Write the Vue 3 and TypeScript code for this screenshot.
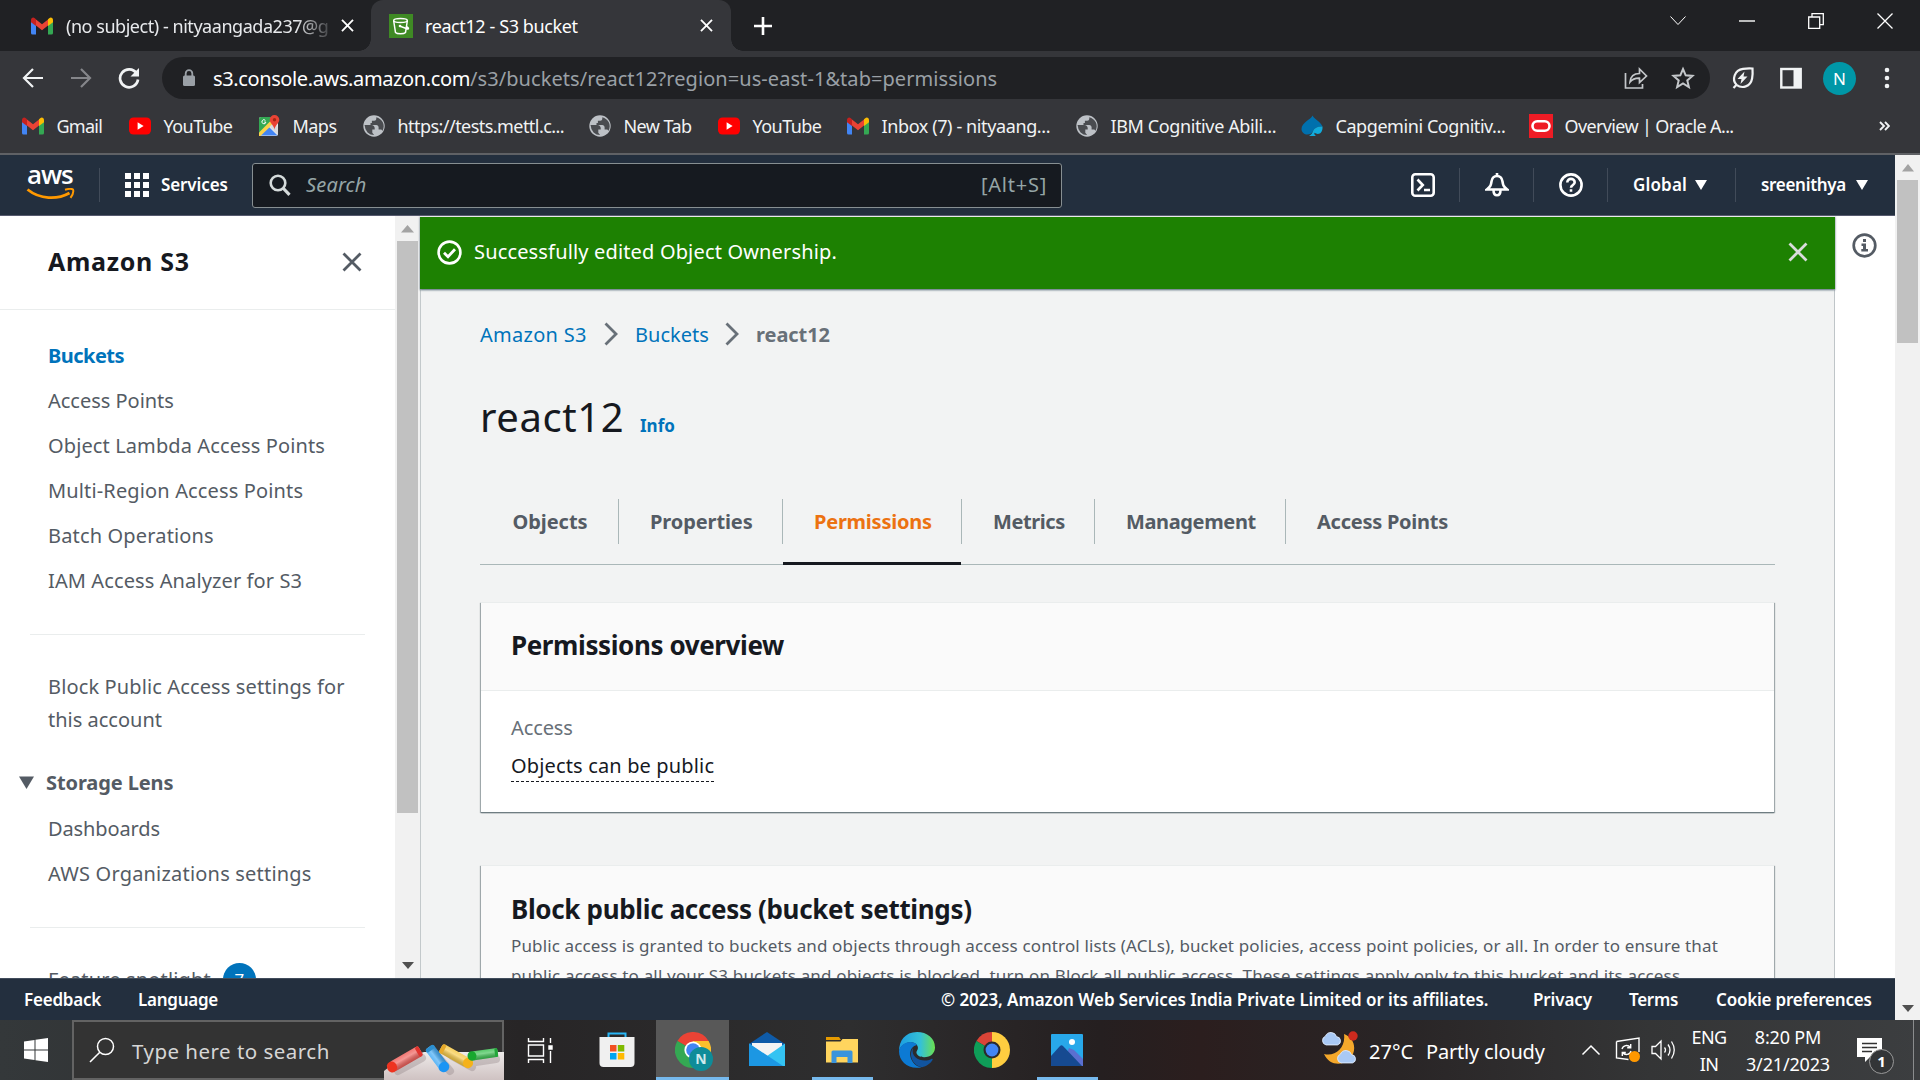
<script setup lang="ts">
interface Bookmark { icon: string; label: string; width: number; spacing: number }
interface Tab { label: string; width: number; spacing: number; active?: boolean }

const bookmarks: Bookmark[] = [
  { icon: 'gmail', label: 'Gmail', width: 107, spacing: -0.76 },
  { icon: 'youtube', label: 'YouTube', width: 129, spacing: -0.54 },
  { icon: 'maps', label: 'Maps', width: 105, spacing: -0.53 },
  { icon: 'globe', label: 'https://tests.mettl.c...', width: 226, spacing: -0.55 },
  { icon: 'globe', label: 'New Tab', width: 129, spacing: -0.58 },
  { icon: 'youtube', label: 'YouTube', width: 129, spacing: -0.54 },
  { icon: 'gmail', label: 'Inbox (7) - nityaang...', width: 229, spacing: -0.39 },
  { icon: 'globe', label: 'IBM Cognitive Abili...', width: 225, spacing: -0.38 },
  { icon: 'capgemini', label: 'Capgemini Cognitiv...', width: 229, spacing: -0.43 },
  { icon: 'oracle', label: 'Overview | Oracle A...', width: 220, spacing: -0.64 },
]

const sideLinks = [
  { label: 'Access Points', spacing: -0.02 },
  { label: 'Object Lambda Access Points', spacing: 0.11 },
  { label: 'Multi-Region Access Points', spacing: 0.14 },
  { label: 'Batch Operations', spacing: 0.16 },
  { label: 'IAM Access Analyzer for S3', spacing: 0.11 },
]

const tabs: Tab[] = [
  { label: 'Objects', width: 139, spacing: -0.06 },
  { label: 'Properties', width: 164, spacing: -0.1 },
  { label: 'Permissions', width: 179, spacing: -0.24, active: true },
  { label: 'Metrics', width: 133, spacing: -0.43 },
  { label: 'Management', width: 191, spacing: -0.37 },
  { label: 'Access Points', width: 192, spacing: -0.26 },
]
</script>

<template>
  <div class="screen">
    <svg width="0" height="0" class="defs">
      <defs>
        <symbol id="gmail" viewBox="0 0 24 18">
          <path d="M1 3.2V16a1.6 1.6 0 0 0 1.6 1.6H6V8L1 3.2z" fill="#4285f4" />
          <path d="M23 3.2V16a1.6 1.6 0 0 1-1.6 1.6H18V8l5-4.8z" fill="#34a853" />
          <path d="M6 8.6V2.4l6 4.8 6-4.8v6.2l-6 4.6z" fill="#ea4335" />
          <path d="M1 3.2v2l5 3.8V2.2L4.800 1.200C3-.2 1 1 1 3.200z" fill="#c5221f" />
          <path d="M23 3.200v2L18 9V2.200l1.200-1C21-.2 23 1 23 3.200z" fill="#fbbc04" />
        </symbol>
        <symbol id="youtube" viewBox="0 0 24 18">
          <rect x="1" y="0.500" width="22" height="17" rx="4.500" fill="#f00" />
          <path d="M9.600 5.300v7.400l6-3.700z" fill="#fff" />
        </symbol>
        <symbol id="maps" viewBox="0 0 24 24">
          <rect x="2" y="3" width="19" height="19" rx="2" fill="#e8eaed" />
          <path d="M2 5a2 2 0 0 1 2-2h12l-4 7-10 10z" fill="#34a853" />
          <path d="M2.500 21.500l9-9 9 9z" fill="#4285f4" />
          <path d="M2 18.500L14.500 6l2.500 3L3.500 22H2z" fill="#fbd24a" />
          <path d="M12.500 12.500L21 21V13l-4-4z" fill="#dadce0" />
          <path d="M17.500 1a4.800 4.800 0 0 0-4.800 4.800c0 3.400 4.300 5.200 4.800 10 .5-4.800 4.800-6.600 4.800-10A4.800 4.800 0 0 0 17.500 1z" fill="#ea4335" />
          <circle cx="17.500" cy="5.800" r="1.700" fill="#a52714" />
          <path d="M8.400 6.400a2 2 0 1 0 .5 1.700H7.200" fill="none" stroke="#fff" stroke-width="1" />
        </symbol>
        <symbol id="globe" viewBox="0 0 24 24">
          <circle cx="12" cy="12" r="10.700" fill="#bdc1c6" />
          <path d="M2.500 11h6.700c2.300 0 3.500 1.300 3.500 3.200v1.400h-2.400v3.200l1.800 2.200A9.200 9.200 0 0 1 2.800 12z" fill="#4a4c50" />
          <path d="M14.300 3.300v1.400c0 1.200-.9 2-2 2H9.900v2.400H8.500v1.800h5.800c1.300 0 2.300 1 2.300 2.300v2.400h1.800c1 0 1.700.5 2 1.400a9.200 9.200 0 0 0-6.100-13.700z" fill="#4a4c50" />
        </symbol>
        <symbol id="capgemini" viewBox="0 0 24 24">
          <path d="M12.500 1.500C11 5.500 1.500 8.500 1.500 15c0 3.500 3 5.500 5.800 5.500 2.500 0 4.700-1 5.700-3.500 1.500-3.500 5-5 9.500-4.500C21 8 14.500 5.500 12.500 1.500z" fill="#0070ad" />
          <path d="M22.500 12.500c-4.500-.5-8 1-9.500 4.500-.6 2.300-2 4-4 5h7c-1.500-.8-1.800-2-1.600-3.200 4 2.700 8.600.7 8.100-6.300z" fill="#12abdb" />
        </symbol>
        <symbol id="oracle" viewBox="0 0 24 24">
          <path d="M0 0h24v24H0z" fill="#ee1c25" />
          <rect x="3.500" y="7.200" width="17" height="9.600" rx="4.800" fill="none" stroke="#fff" stroke-width="2.600" />
        </symbol>
        <symbol id="cross" viewBox="0 0 20 20">
          <path d="M1.500 1.500l17 17M18.500 1.500l-17 17" fill="none" stroke="currentColor" stroke-width="2.800" />
        </symbol>
        <symbol id="chrome" viewBox="0 0 36 36">
          <path d="M18 18L2.400 9A18 18 0 0 1 33.600 9z" fill="#ea4335" />
          <path d="M18 18L2.400 9A18 18 0 0 0 18 36l7.800-13.500z" fill="#34a853" />
          <path d="M18 18h7.800L18 36A18 18 0 0 0 33.600 9H18z" fill="#fbc02d" />
          <circle cx="18" cy="18" r="8.600" fill="#fff" />
          <circle cx="18" cy="18" r="6.800" fill="#4285f4" />
        </symbol>
        <symbol id="cloud" viewBox="0 0 24 16">
          <path d="M5.500 15A5 5 0 0 1 4.800 5.500 6.500 6.500 0 0 1 17 6a4.600 4.600 0 0 1 1 9z" fill="#a9c9f5" stroke="#dfeafc" stroke-width="1" />
        </symbol>
      </defs>
    </svg>

    <header class="tabstrip">
      <div class="btab idle">
        <svg class="fav" width="24" height="18"><use href="#gmail" /></svg>
        <span class="btitle fade">(no subject) - nityaangada237@g</span>
        <svg class="bclose" width="13" height="13"><use href="#cross" /></svg>
      </div>
      <div class="btab current">
        <svg class="fav s3" width="24" height="24" viewBox="0 0 24 24">
          <path d="M0 0h24v24H0z" fill="#3f8a24" />
          <ellipse cx="11.500" cy="6.500" rx="6.800" ry="2" fill="none" stroke="#fff" stroke-width="1.500" />
          <path d="M4.700 7l1.800 11.500c1.500 1.700 8.500 1.700 10 0L18.300 7M10.500 12l8 3c1.700 0 1-1.500-1.200-2.500" fill="none" stroke="#fff" stroke-width="1.500" />
          <circle cx="11" cy="12" r="1.300" fill="#fff" />
        </svg>
        <span class="btitle">react12 - S3 bucket</span>
        <svg class="bclose" width="13" height="13"><use href="#cross" /></svg>
      </div>
      <svg class="plus" width="20" height="20" viewBox="0 0 20 20"><path d="M10 1v18M1 10h18" stroke="#fff" stroke-width="2.600" /></svg>
      <div class="winctl">
        <svg width="16" height="16" viewBox="0 0 16 16"><path d="M.5 3.500l7.500 8 7.500-8" /></svg>
        <svg width="16" height="16" viewBox="0 0 16 16"><path d="M0 8h16" stroke-width="1.400" /></svg>
        <svg width="16" height="16" viewBox="0 0 16 16"><path d="M.7 4h11v11.300h-11zM4 4V.7h11.300v11H12" stroke-width="1.300" /></svg>
        <svg width="16" height="16" viewBox="0 0 16 16"><path d="M.5.5l15 15M15.500.5l-15 15" stroke-width="1.300" /></svg>
      </div>
    </header>

    <div class="toolbar">
      <svg class="navi" width="22" height="22" viewBox="0 0 22 22"><path d="M21 11H2.500M11 2L2 11l9 9" stroke="#f1f3f4" /></svg>
      <svg class="navi" width="22" height="22" viewBox="0 0 22 22"><path d="M1 11h18.500M11 2l9 9-9 9" stroke="#85868a" /></svg>
      <svg class="navi" width="22" height="22" viewBox="0 0 22 22"><path d="M18.500 6.200A9 9 0 1 0 20 12.500" stroke="#f1f3f4" stroke-width="2.700" /><path d="M21 1v8.500h-8.500z" fill="#f1f3f4" stroke="none" /></svg>
      <div class="omnibox">
        <svg width="14" height="18" viewBox="0 0 14 18"><rect x="1" y="6.500" width="12" height="10.500" rx="1.500" fill="#9aa0a6" /><path d="M3.700 7V4.500a3.300 3.300 0 0 1 6.600 0V7" fill="none" stroke="#9aa0a6" stroke-width="1.800" /></svg>
        <span class="url"><b>s3.console.aws.amazon.com</b>/s3/buckets/react12?region=us-east-1&amp;tab=permissions</span>
        <svg class="share" width="24" height="24" viewBox="0 0 24 24"><path d="M1.500 7v15h17v-4M6 16c.5-5.500 4-8.500 9.500-8.500V3l7 7-7 6.500v-4.300C11.500 12 8.500 13 6 16z" fill="none" stroke="#c4c7ca" stroke-width="1.700" /></svg>
        <svg class="star" width="24" height="24" viewBox="0 0 24 24"><path d="M12 3l2.700 6.300 6.800.6-5.200 4.500 1.600 6.700L12 17.500l-5.900 3.600 1.600-6.700L2.500 9.900l6.800-.6z" fill="none" stroke="#c4c7ca" stroke-width="2" /></svg>
      </div>
      <svg class="ext" width="24" height="24" viewBox="0 0 24 24"><path d="M2.500 22l3-3.200M5.500 18.800C.5 13.500 3.500 4 12 2.800c3-.4 6-.6 9.500-.3.300 4.500.2 7-.4 10C19.500 21 11 23 5.500 18.800z" fill="none" stroke="#f1f3f4" stroke-width="2.200" /><path d="M13.500 5.500l-7 7.500h4l-1 5 7-7.500h-4z" fill="#f1f3f4" /></svg>
      <svg class="panel" width="22" height="22" viewBox="0 0 22 22"><rect x="1.300" y="2" width="19.400" height="18.500" fill="none" stroke="#f1f3f4" stroke-width="2.400" /><path d="M13.500 2H21v18.500h-7.500z" fill="#f1f3f4" /></svg>
      <span class="avatar">N</span>
      <svg class="dots" width="6" height="22" viewBox="0 0 6 22"><circle cx="3" cy="3" r="2.300" /><circle cx="3" cy="11" r="2.300" /><circle cx="3" cy="19" r="2.300" /></svg>
    </div>

    <nav class="bookmarks">
      <div v-for="(b, i) in bookmarks" :key="i" class="bm" :style="{ width: b.width + 'px', letterSpacing: b.spacing + 'px' }">
        <svg width="24" :height="b.icon === 'gmail' || b.icon === 'youtube' ? 18 : 24"><use :href="'#' + b.icon" /></svg>
        <span>{{ b.label }}</span>
      </div>
      <svg class="more" width="11" height="10" viewBox="0 0 11 10"><path d="M1 1l4 4-4 4M6 1l4 4-4 4" fill="none" stroke="#f1f3f4" stroke-width="1.900" /></svg>
    </nav>

    <div class="page">
      <div class="console">
        <header class="awsnav">
          <div class="logo">
            <span>aws</span>
            <svg width="50" height="14" viewBox="0 0 50 14"><path d="M1.500 1.500C14 11.500 31 12 43.500 5" fill="none" stroke="#f90" stroke-width="2.800" /><path d="M39 1.800c3.500-1 6.500-1.300 8-.3.800 2-.5 5.500-2.500 8.300" fill="none" stroke="#f90" stroke-width="2" /></svg>
          </div>
          <i class="vr first"></i>
          <svg class="grid" width="24" height="24" viewBox="0 0 24 24" fill="#fff"><path d="M0 0h6v6H0zM9 0h6v6H9zM18 0h6v6h-6zM0 9h6v6H0zM9 9h6v6H9zM18 9h6v6h-6zM0 18h6v6H0zM9 18h6v6H9zM18 18h6v6h-6z" /></svg>
          <span class="services">Services</span>
          <div class="search">
            <svg width="22" height="22" viewBox="0 0 22 22"><circle cx="9" cy="9" r="7.300" fill="none" stroke="#d5dbdb" stroke-width="2.600" /><path d="M14 14l6.500 6.800" stroke="#d5dbdb" stroke-width="3.200" /></svg>
            <em>Search</em>
            <span>[Alt+S]</span>
          </div>
          <svg class="shell" width="24" height="24" viewBox="0 0 24 24"><rect x="1.300" y="1.300" width="21.400" height="21.400" rx="3" /><path d="M6.500 6.500l5.300 5.500-5.300 5.500M13 17h6" /></svg>
          <i class="vr"></i>
          <svg class="ni" width="24" height="24" viewBox="0 0 24 24"><path d="M12 0v3M1.800 16.500c4-3 4.200-4.500 4.700-8C7 5 9 3 12 3s5 2 5.500 5.500c.5 3.500.7 5 4.700 8zM8.500 17c0 7 7 7 7 0" /></svg>
          <i class="vr"></i>
          <svg class="ni" width="24" height="24" viewBox="0 0 24 24"><circle cx="12" cy="12" r="10.600" /><path d="M8.300 9.500c0-5 7.400-4.600 7.400-.3 0 3-3.700 2.500-3.700 5.600M12 16.300v2.500" /></svg>
          <i class="vr"></i>
          <span class="region">Global</span><i class="caret"></i>
          <i class="vr r2"></i>
          <span class="user">sreenithya</span><i class="caret u"></i>
        </header>

        <div class="body">
          <aside class="side">
            <div class="sidehead"><span>Amazon S3</span><svg width="20" height="20"><use href="#cross" /></svg></div>
            <div class="links">
              <a class="sel">Buckets</a>
              <a v-for="l in sideLinks" :key="l.label" :style="{ letterSpacing: l.spacing + 'px' }">{{ l.label }}</a>
            </div>
            <hr />
            <a class="bpa">Block Public Access settings for<br /><span>this account</span></a>
            <div class="lens"><svg width="15" height="13" viewBox="0 0 15 13"><path d="M0 .5h15L7.500 13z" fill="#545b64" /></svg><span>Storage Lens</span></div>
            <div class="links two"><a class="dash">Dashboards</a><a class="orgs">AWS Organizations settings</a></div>
            <hr />
            <div class="feature"><a>Feature spotlight</a><span>7</span></div>
          </aside>
          <div class="scroll inner">
            <svg width="13" height="8" viewBox="0 0 13 8"><path d="M6.500 0L13 7.500H0z" fill="#a3a3a3" /></svg>
            <i></i>
            <svg class="dn" width="12" height="7" viewBox="0 0 12 7"><path d="M6 7L0 0h12z" fill="#505050" /></svg>
          </div>

          <main class="main">
            <div class="flash">
              <svg width="25" height="25" viewBox="0 0 25 25"><circle cx="12.500" cy="12.500" r="10.900" fill="none" stroke="#fff" stroke-width="2.600" /><path d="M7 12.800l4 3.900 7-7.400" fill="none" stroke="#fff" stroke-width="2.800" /></svg>
              <span>Successfully edited Object Ownership.</span>
              <svg class="fx" width="20" height="20"><use href="#cross" /></svg>
            </div>
            <div class="inside">
              <div class="crumbs">
                <a>Amazon S3</a>
                <svg width="14" height="24" viewBox="0 0 14 24"><path d="M1.500 1.500L12 12 1.500 22.500" /></svg>
                <a class="c2">Buckets</a>
                <svg width="14" height="24" viewBox="0 0 14 24"><path d="M1.500 1.500L12 12 1.500 22.500" /></svg>
                <b>react12</b>
              </div>
              <div class="heading"><h1>react12</h1><a>Info</a></div>
              <div class="tabs">
                <div v-for="t in tabs" :key="t.label" class="tab" :class="{ active: t.active }" :style="{ width: t.width + 'px', letterSpacing: t.spacing + 'px' }"><span>{{ t.label }}</span></div>
              </div>
              <section class="card overview">
                <h2>Permissions overview</h2>
                <div class="cbody"><p>Access</p><span class="pub">Objects can be public</span></div>
              </section>
              <section class="card block">
                <h2>Block public access (bucket settings)</h2>
                <p>Public access is granted to buckets and objects through access control lists (ACLs), bucket policies, access point policies, or all. In order to ensure that<br /><span>public access to all your S3 buckets and objects is blocked, turn on Block all public access. These settings apply only to this bucket and its access</span></p>
              </section>
            </div>
          </main>
          <div class="tools">
            <svg width="25" height="25" viewBox="0 0 25 25"><circle cx="12.500" cy="12.500" r="10.800" fill="none" stroke="#545b64" stroke-width="2.700" /><path d="M11 6h3v3h-3zM9.500 10.500H14V16h2v2.500H9.300V16H11v-3H9.500z" fill="#545b64" /></svg>
          </div>
        </div>

        <footer class="foot">
          <span class="fb">Feedback</span><span class="lang">Language</span>
          <span class="copy">© 2023, Amazon Web Services India Private Limited or its affiliates.</span>
          <span class="priv">Privacy</span><span class="terms">Terms</span><span class="cook">Cookie preferences</span>
        </footer>
      </div>
      <div class="scroll outer">
        <svg width="12" height="8" viewBox="0 0 12 8"><path d="M6 0l6 7.500H0z" fill="#a3a3a3" /></svg>
        <i></i>
        <svg class="dn" width="12" height="7" viewBox="0 0 12 7"><path d="M6 7L0 0h12z" fill="#505050" /></svg>
      </div>
    </div>

    <div class="taskbar">
      <div class="start"><svg width="24" height="24" viewBox="0 0 24 24" fill="#fff"><path d="M0 3.500l10.500-1.500v9.500H0zM11.500 1.800L24 0v11.500H11.500zM0 12.500h10.500V22L0 20.500zM11.500 12.500H24V24l-12.500-1.800z" /></svg></div>
      <div class="tsearch">
        <svg width="26" height="26" viewBox="0 0 26 26"><circle cx="16.500" cy="9.500" r="8" fill="none" stroke="#fff" stroke-width="1.500" /><path d="M10.800 15.200L1 25" stroke="#fff" stroke-width="1.600" /></svg>
        <span>Type here to search</span>
        <svg class="chalks" width="120" height="36" viewBox="0 0 120 36">
          <defs>
            <linearGradient id="paper" x1="0" y1="0" x2="0" y2="1"><stop offset="0" stop-color="#eeebea" /><stop offset="1" stop-color="#cfc2c2" /></linearGradient>
            <linearGradient id="stick" x1="0" y1="0" x2="0" y2="1"><stop offset="0" stop-color="#fff" stop-opacity=".15" /><stop offset=".4" stop-color="#fff" stop-opacity=".35" /><stop offset="1" stop-color="#000" stop-opacity=".18" /></linearGradient>
          </defs>
          <path d="M0 36v-9L14 16 40 8h80v28z" fill="url(#paper)" />
          <path d="M14 27L38 14M66 27L52 10M88 23L68 12M92 18l20-3" stroke="#8d7f80" stroke-width="8" stroke-linecap="round" opacity=".35" fill="none" />
          <g transform="translate(8 23) rotate(-30)"><rect x="0" y="-5.500" width="33" height="11" rx="2.500" fill="#ef5f5a" /><rect x="0" y="-5.500" width="33" height="11" rx="2.500" fill="url(#stick)" /><rect x="29" y="-5.500" width="4" height="11" rx="2" fill="#e0342e" /><ellipse cx="0" cy="0" rx="5" ry="5.600" fill="#ee3320" /></g>
          <g transform="translate(60 23) rotate(-127)"><rect x="0" y="-5" width="25" height="10" rx="2.500" fill="#3fa9f5" /><rect x="0" y="-5" width="25" height="10" rx="2.500" fill="url(#stick)" /><rect x="21" y="-5" width="4" height="10" rx="2" fill="#2b8fd0" /><ellipse cx="0" cy="0" rx="5" ry="5.500" fill="#1b95f4" /></g>
          <g transform="translate(84 19) rotate(-151)"><rect x="0" y="-5" width="31" height="10" rx="2.500" fill="#f6c945" /><rect x="0" y="-5" width="31" height="10" rx="2.500" fill="url(#stick)" transform="scale(1 -1)" /><rect x="27" y="-5" width="4" height="10" rx="2" fill="#e5a92a" /><ellipse cx="0" cy="0" rx="5" ry="5.200" fill="#f5b21a" /></g>
          <g transform="translate(88 12) rotate(-8)"><rect x="0" y="-4.500" width="26" height="9" rx="2" fill="#3cc152" /><rect x="0" y="-4.500" width="26" height="9" rx="2" fill="url(#stick)" /><rect x="23" y="-4.500" width="3" height="9" rx="1.500" fill="#22a83a" /><ellipse cx="0" cy="0" rx="4.500" ry="4.800" fill="#17a82e" /></g>
        </svg>
      </div>
      <div class="apps">
        <div class="app tv"><svg width="26" height="26" viewBox="0 0 26 26" fill="none" stroke="#fff" stroke-width="1.400"><path d="M1.500 1v3.500h15V1M1.500 8h15v11h-15zM1.500 26v-3.500h15V26M23.500 1v5M23.500 14v12" /><path d="M22 9h3v3h-3z" fill="#fff" /></svg></div>
        <div class="app store"><svg width="36" height="36" viewBox="0 0 36 36"><path d="M9.500 7V1.500h17V7" fill="none" stroke="#29b6f6" stroke-width="2" /><path d="M.5 5h35v26a4 4 0 0 1-4 4h-27a4 4 0 0 1-4-4z" fill="#f0f0f0" /><path d="M11 13h6.500v6.500H11z" fill="#f25022" /><path d="M18.800 13h6.500v6.500h-6.500z" fill="#7fba00" /><path d="M11 21h6.500v6.500H11z" fill="#00a4ef" /><path d="M18.800 21h6.500v6.500h-6.500z" fill="#ffb900" /></svg></div>
        <div class="app on"><svg width="36" height="36"><use href="#chrome" /></svg><span>N</span></div>
        <div class="app mail"><svg width="36" height="36" viewBox="0 0 36 36"><path d="M0 13L18 1l18 12v6H0z" fill="#0f5ba8" /><path d="M3 12h30v14H3z" fill="#f4f4f4" /><path d="M0 12.500L18 25l18-12.500V35H0z" fill="#34c3f2" /><path d="M0 12.500L34 35H0z" fill="#1c97e3" /></svg></div>
        <div class="app run files"><svg width="32" height="28" viewBox="0 0 32 28"><path d="M0 1h13l2 3H0z" fill="#e59a00" /><path d="M0 5.500h14.500l2-2.500H32v23.500H0z" fill="#ffd55e" /><path d="M5.500 27V16a1.500 1.500 0 0 1 1.500-1.500h18a1.500 1.500 0 0 1 1.500 1.500v11h-5v-6h-11v6z" fill="#3a94dc" /></svg></div>
        <div class="app edge"><svg width="36" height="36" viewBox="0 0 36 36">
          <defs><linearGradient id="e1"><stop offset="0" stop-color="#1b9de2" /><stop offset=".6" stop-color="#35c1d6" /><stop offset="1" stop-color="#6be04f" /></linearGradient></defs>
          <path d="M18 0C6 0 0 9 0 19 3 9 16 8 18.500 14c1.500 3.500-1.500 5-1 7 1 4 7 5 12 3.500 4-1.200 6.500-5 6.500-9C36 6 28 0 18 0z" fill="url(#e1)" />
          <path d="M0 19C2 9 15 8 18 13c-5 1-8 6-6.500 12 1.500 5.500 5.500 9.500 11 10.300C10 38 0 30 0 19z" fill="#0c7ad4" />
          <path d="M14 16c-5 7 0 18 9 19.200 4.500-.7 8.500-4 10.500-7.200.5-1-.3-1.500-1.200-1C25 31 11 27 14 16z" fill="#11549f" />
        </svg></div>
        <div class="app chrome2"><svg width="36" height="36" viewBox="0 0 36 36"><path d="M18 18L2.400 9A18 18 0 0 1 18 0z" fill="#db4437" /><path d="M18 18L2.400 9A18 18 0 0 0 18 36z" fill="#0f9d58" /><path d="M18 0a18 18 0 0 1 0 36z" fill="#ffcd40" /><circle cx="18" cy="18" r="8.500" fill="#2a2a2c" /><circle cx="18" cy="18" r="6.400" fill="#4285f4" /></svg></div>
        <div class="app run photos"><svg width="32" height="32" viewBox="0 0 32 32"><rect width="32" height="32" rx="1" fill="#28a8ea" /><path d="M18 14l5 2 9 9v7H10z" fill="#5b6fd0" /><path d="M0 22l9-10q1.500-1.500 3 0l19 20H0z" fill="#164a91" /><circle cx="21" cy="8" r="3" fill="#fff" /></svg></div>
      </div>
      <div class="tray">
        <svg class="moon" width="38" height="36" viewBox="0 0 38 36"><path d="M23 3C31 6 35.500 14 32 23 27 35 9 37 3 23 14 26 25 17 23 3z" fill="#f5a82b" /><circle cx="32" cy="5" r="4.700" fill="#cc2a1e" /><svg x="0" y="0" width="22" height="15"><use href="#cloud" /></svg><svg x="15" y="18" width="22" height="15"><use href="#cloud" /></svg></svg>
        <span class="temp">27°C</span><span class="wx">Partly cloudy</span>
        <svg class="up" width="20" height="12" viewBox="0 0 20 12"><path d="M1.500 10.500L10 2l8.500 8.500" fill="none" stroke="#fff" stroke-width="1.500" /></svg>
        <svg class="dev" width="26" height="26" viewBox="0 0 26 26"><path d="M1.500 4.500L24 1v14M1.500 4.500V21l12 1.500M7 12c1-4 6-4.500 8.500-1.500M15.700 7v3.700h-3.500M16 14c-1 4-6 4.500-8.500 1.500M7.300 19v-3.500h3.500" fill="none" stroke="#fff" stroke-width="1.400" /><circle cx="19.500" cy="19.500" r="5.500" fill="#ff9800" /></svg>
        <svg class="vol" width="25" height="22" viewBox="0 0 25 22"><path d="M1 7.500h3.500L10 2v18l-5.500-5.500H1zM13.500 8.500q2 2.500 0 5M17 5.500q4 5.500 0 11M20.500 2.500q5.500 8.500 0 17" fill="none" stroke="#fff" stroke-width="1.300" /></svg>
        <div class="two-line eng"><span>ENG</span><span>IN</span></div>
        <div class="two-line clock"><span class="t">8:20 PM</span><span>3/21/2023</span></div>
        <div class="notif"><svg width="25" height="26" viewBox="0 0 25 26"><path d="M0 1h25v19H13l-5 5v-5H0z" fill="#fff" /><path d="M5 6.500h15M5 10.500h15M5 14.500h10" stroke="#333" stroke-width="1.300" /></svg><b>1</b></div>
        <i class="peek"></i>
      </div>
    </div>
  </div>
</template>

<style>
body { margin: 0; overflow: hidden; background: #202124; }
</style>

<style scoped>
* { box-sizing: border-box; }
.screen { width: 1920px; height: 1080px; display: flex; flex-direction: column; overflow: hidden; font-family: "Noto Sans", "Open Sans", sans-serif; white-space: nowrap; }
.defs { position: absolute; }
svg { display: block; flex: none; }
hr, h1, h2, p { margin: 0; }

.tabstrip { height: 51px; flex: none; background: #202124; display: flex; align-items: center; color: #fff; }
.btab { display: flex; align-items: center; height: 51px; }
.idle { width: 371px; padding-left: 30px; }
.fav { margin-right: 12px; }
.btitle { width: 275px; font-size: 18px; letter-spacing: -.4px; overflow: hidden; }
.fade { width: 264px; letter-spacing: -.46px; color: #e8eaed; -webkit-mask-image: linear-gradient(90deg, #000 230px, rgba(0,0,0,.2) 262px); mask-image: linear-gradient(90deg, #000 230px, rgba(0,0,0,.2) 262px); }
.idle .bclose { margin-left: 11px; }
.current { position: relative; width: 360px; padding-left: 18px; background: #35363a; border-radius: 12px 12px 0 0; }
.current::before, .current::after { content: ""; position: absolute; bottom: 0; width: 12px; height: 12px; }
.current::before { left: -12px; background: radial-gradient(circle at 0 0, transparent 11.5px, #35363a 12px); }
.current::after { right: -12px; background: radial-gradient(circle at 100% 0, transparent 11.5px, #35363a 12px); }
.plus { margin-left: 22px; }
.winctl { margin-left: auto; display: flex; gap: 53px; padding: 0 27px 9px 0; fill: none; stroke: #fff; }

.toolbar { height: 54px; flex: none; background: #35363a; display: flex; align-items: center; padding: 0 0 0 22px; }
.navi { margin-right: 26px; fill: none; stroke-width: 2.200; }
.omnibox { width: 1548px; height: 42px; margin-left: -4px; border-radius: 21px; background: #202124; display: flex; align-items: center; padding-left: 20px; }
.url { flex: 1; margin-left: 17px; font-size: 20px; letter-spacing: .06px; color: #9aa0a6; }
.url b { font-weight: 400; color: #fff; letter-spacing: -.38px; }
.share { margin-right: 23px; }
.star { margin-right: 15px; }
.ext { margin-left: 21px; }
.panel { margin-left: 25px; }
.avatar { width: 33px; height: 33px; margin-left: 21px; border-radius: 50%; background: #0097a7; color: #fff; font-size: 17px; line-height: 33px; text-align: center; }
.dots { margin-left: 28px; fill: #f1f3f4; }

.bookmarks { height: 50px; flex: none; background: #35363a; border-bottom: 2px solid #5f6165; display: flex; padding: 0 0 7px 21px; color: #f1f3f4; font-size: 18px; }
.bm { display: flex; align-items: center; gap: 11.500px; }
.more { margin: 16px 0 0 130px; }

.page { flex: none; height: 865px; display: flex; }
.console { width: 1895px; display: flex; flex-direction: column; }
.awsnav { height: 61px; flex: none; background: #232f3e; border-bottom: 1px solid #565a6e; display: flex; align-items: center; color: #fff; font-size: 17px; font-weight: 600; }
.logo { width: 50px; height: 36px; margin: 0 0 4px 26px; }
.logo span { display: block; height: 23px; margin-left: 1px; font: 600 26px/19px "Open Sans", sans-serif; letter-spacing: -1.1px; }
.vr { width: 1px; height: 34px; background: #414b59; flex: none; margin-left: 24px; margin-right: 25px; }
.vr.first { margin-left: 23px; margin-right: 25px; }
.services { width: 91px; margin-left: 12px; letter-spacing: -.1px; }
.services, .region, .user { padding-bottom: 1px; }
.search { width: 810px; height: 45px; border: 1px solid #878f92; border-radius: 3px; background: #161a20; display: flex; align-items: center; padding: 0 14px 0 16px; font-size: 20px; font-weight: 400; color: #95a5a6; }
.search em { margin: -1px 0 0 15px; letter-spacing: .15px; flex: 1; }
.search span { margin-top: -1px; letter-spacing: .75px; }
.shell { margin-left: 349px; }
.shell, .ni { fill: none; stroke: #fff; stroke-width: 2.600; }
.region { width: 62px; letter-spacing: .16px; }
.user { width: 94px; letter-spacing: -.3px; }
.caret { border: 6.500px solid transparent; border-top: 10px solid #fff; border-bottom: 0; margin-bottom: 1px; }
.caret.u { margin-left: 1px; }
.vr.r2 { margin-left: 28px; }

.body { height: 762px; flex: none; display: flex; overflow: hidden; }
.side { width: 395px; background: #fff; overflow: hidden; color: #545b64; font-size: 20px; line-height: 33px; }
.sidehead { height: 94px; border-bottom: 1px solid #eaeded; display: flex; justify-content: space-between; padding: 29px 33px 0 48px; }
.sidehead span { color: #16191f; font-size: 25px; font-weight: 700; letter-spacing: .7px; }
.sidehead svg { margin-top: 7px; }
.links { display: flex; flex-direction: column; gap: 12px; padding: 29px 0 0 48px; }
.links .sel { color: #0073bb; font-weight: 700; letter-spacing: -.53px; }
.side hr { border: 0; height: 1px; background: #eaeded; margin: 37px 30px 35px; }
.bpa { display: block; margin-left: 48px; letter-spacing: .13px; }
.bpa span { letter-spacing: 0; }
.lens { display: flex; align-items: center; padding-left: 19px; margin-top: 30px; font-weight: 700; letter-spacing: -.1px; }
.lens span { margin-left: 12px; }
.two { padding-top: 13px; }
.dash { letter-spacing: -.11px; }
.orgs { letter-spacing: .2px; }
.feature { display: flex; align-items: center; margin-left: 48px; letter-spacing: .16px; }
.feature span { width: 33px; height: 33px; margin-left: 12px; border-radius: 50%; background: #0073bb; color: #fff; font-size: 17px; text-align: center; letter-spacing: 0; }
.scroll { width: 25px; flex: none; background: #f1f1f1; display: flex; flex-direction: column; align-items: center; }
.scroll i { width: 21px; background: #c1c1c1; }
.scroll .dn { margin-top: auto; }
.inner { padding: 9px 0 9px; }
.inner i { height: 572px; margin-top: 8px; }
.outer { padding: 9px 0 8px; }
.outer i { height: 163px; margin-top: 8px; }

.main { width: 1415px; background: #f2f3f3; border-left: 1px solid #c3c9cb; border-right: 1px solid #bfc5c8; }
.flash { height: 73px; margin: 0 -1px; position: relative; border-top: 1px solid #e8ebeb; background: #1d8102; box-shadow: 0 1px 2px #4b6170; color: #fff; display: flex; font-size: 20px; padding: 23px 27px 0 17px; letter-spacing: .16px; }
.flash span { flex: 1; margin-left: 12px; margin-top: -5px; line-height: 33px; }
.flash .fx { margin-top: 2px; color: #d9dcdc; }
.inside { padding: 0 59px; }
.crumbs { display: flex; align-items: center; height: 24px; margin-top: 33px; font-size: 20px; }
.crumbs a { color: #0073bb; width: 107px; letter-spacing: .28px; }
.crumbs svg { margin: 0 17px 0 17px; fill: none; stroke: #687078; stroke-width: 2.800; }
.crumbs .c2 { width: 73px; letter-spacing: .02px; }
.crumbs b { color: #687078; letter-spacing: -.05px; }
.heading { display: flex; align-items: baseline; height: 54px; margin-top: 41px; }
h1 { width: 160px; font-size: 40px; font-weight: 400; line-height: 60px; letter-spacing: .6px; color: #16191f; }
.heading a { color: #0073bb; font-size: 17px; font-weight: 700; }
.tabs { display: flex; height: 85px; margin-top: 39px; border-bottom: 1px solid #aab7b8; padding-top: 19px; }
.tab { height: 66px; color: #545b64; font-size: 20px; font-weight: 700; line-height: 45px; }
.tab span { display: block; height: 45px; padding-left: 31px; border-right: 1px solid #aab7b8; }
.tab:first-child span { padding-left: 32.500px; }
.tab:last-child span { border: 0; }
.active { color: #ec7211; position: relative; }
.active::after { content: ""; position: absolute; left: 0; right: 1px; bottom: 0; height: 3px; background: #16191f; }
.card { margin: 37px 1px 0; background: #fff; border-top: 1px solid #eaeded; box-shadow: 0 1px 1px #6f7d82, 1px 1px 1px rgba(0,28,36,.3), -1px 1px 1px rgba(0,28,36,.3); color: #16191f; }
h2 { font-size: 26px; font-weight: 700; letter-spacing: -.4px; }
.overview { height: 210px; }
.overview h2 { height: 88px; line-height: 84px; background: #fafafa; border-bottom: 1px solid #eaeded; padding-left: 30px; }
.cbody { padding: 20px 30px; font-size: 20px; line-height: 34px; }
.cbody p { color: #687078; letter-spacing: -.1px; }
.pub { display: inline-block; height: 33px; margin-top: 4px; line-height: 33px; letter-spacing: .15px; border-bottom: 1px dashed #16191f; }
.block { height: 300px; margin-top: 53px; background: #fafafa; padding: 24px 30px; }
.block h2 { line-height: 38px; letter-spacing: -.34px; }
.block p { margin-top: 3px; font-size: 17px; line-height: 30px; letter-spacing: .135px; color: #545b64; }
.block p span { letter-spacing: .17px; }
.tools { width: 60px; background: #fff; padding: 17px 0 0 17px; }

.foot { height: 42px; flex: none; background: #232f3e; border-top: 1px solid #414d5c; color: #fff; font-size: 17px; font-weight: 600; line-height: 41px; display: flex; padding-left: 24px; }
.fb { width: 114px; letter-spacing: -.22px; }
.lang { width: 803px; letter-spacing: -.26px; }
.copy { width: 592px; letter-spacing: -.07px; }
.priv { width: 96px; letter-spacing: -.11px; }
.terms { width: 87px; letter-spacing: -.3px; }
.cook { letter-spacing: -.22px; }

.taskbar { height: 60px; flex: none; display: flex; color: #fff; background: linear-gradient(90deg, #34383a 0, #2f3031 300px, #272526 520px, #2e2e2f 850px, #251f20 1100px, #2b1e1e 1200px, #292526 1400px, #343536 1650px, #3c3e40 1920px); }
.start { width: 72px; padding: 18px 24px; }
.tsearch { width: 432px; height: 60px; background: #333; border: 2px solid #636363; display: flex; align-items: center; padding-left: 15px; position: relative; font-size: 20.500px; color: #d6d6d6; }
.tsearch > span { margin: 2px 0 0 17px; letter-spacing: .48px; }
.chalks { position: absolute; right: -2px; bottom: -2px; }
.apps { display: flex; }
.app { width: 61px; height: 60px; display: flex; align-items: center; justify-content: center; }
.tv { width: 74px; padding-right: 2px; }
.store { width: 78px; padding-right: 1px; }
.on { width: 73px; position: relative; background: #585858; border-bottom: 3px solid #76b9ed; padding-top: 3px; }
.on span { position: absolute; left: 33px; top: 27px; width: 24px; height: 24px; border-radius: 50%; background: #0e8c99; font-size: 14px; font-weight: 700; line-height: 24px; text-align: center; color: #cfe9ec; }
.mail { width: 76px; }
.mail svg { margin-top: -2px; }
.run { border-bottom: 3px solid #76b9ed; padding: 3px 2px 0 0; margin-left: 7px; }
.edge { width: 88px; padding-right: 1px; }
.chrome2 { width: 62px; padding-right: 1px; }
.photos { margin-left: 14px; }
.tray { display: flex; align-items: center; margin-left: auto; width: 600px; position: relative; }
.moon { margin: -3px 10px 0 1px; }
.temp, .wx { font-size: 20px; margin-top: 2px; }
.temp { width: 57px; }
.wx { width: 155px; letter-spacing: -.18px; }
.up { margin-top: -1px; }
.dev { margin: 0 10px 0 14px; }
.two-line { display: flex; flex-direction: column; align-items: center; font-size: 18px; line-height: 27px; margin-top: 1px; }
.eng { width: 36px; margin-left: 15px; letter-spacing: -.6px; }
.clock { width: 86px; margin-left: 18px; letter-spacing: -.16px; }
.notif { position: relative; margin-left: 26px; }
.notif b { position: absolute; left: 12px; top: 12px; width: 25px; height: 25px; border: 1.500px solid #999; border-radius: 50%; background: #333537; font-size: 15px; line-height: 22px; text-align: center; }
.peek { position: absolute; right: 6px; top: 0; width: 1px; height: 60px; background: #8a8c8d; }
</style>
